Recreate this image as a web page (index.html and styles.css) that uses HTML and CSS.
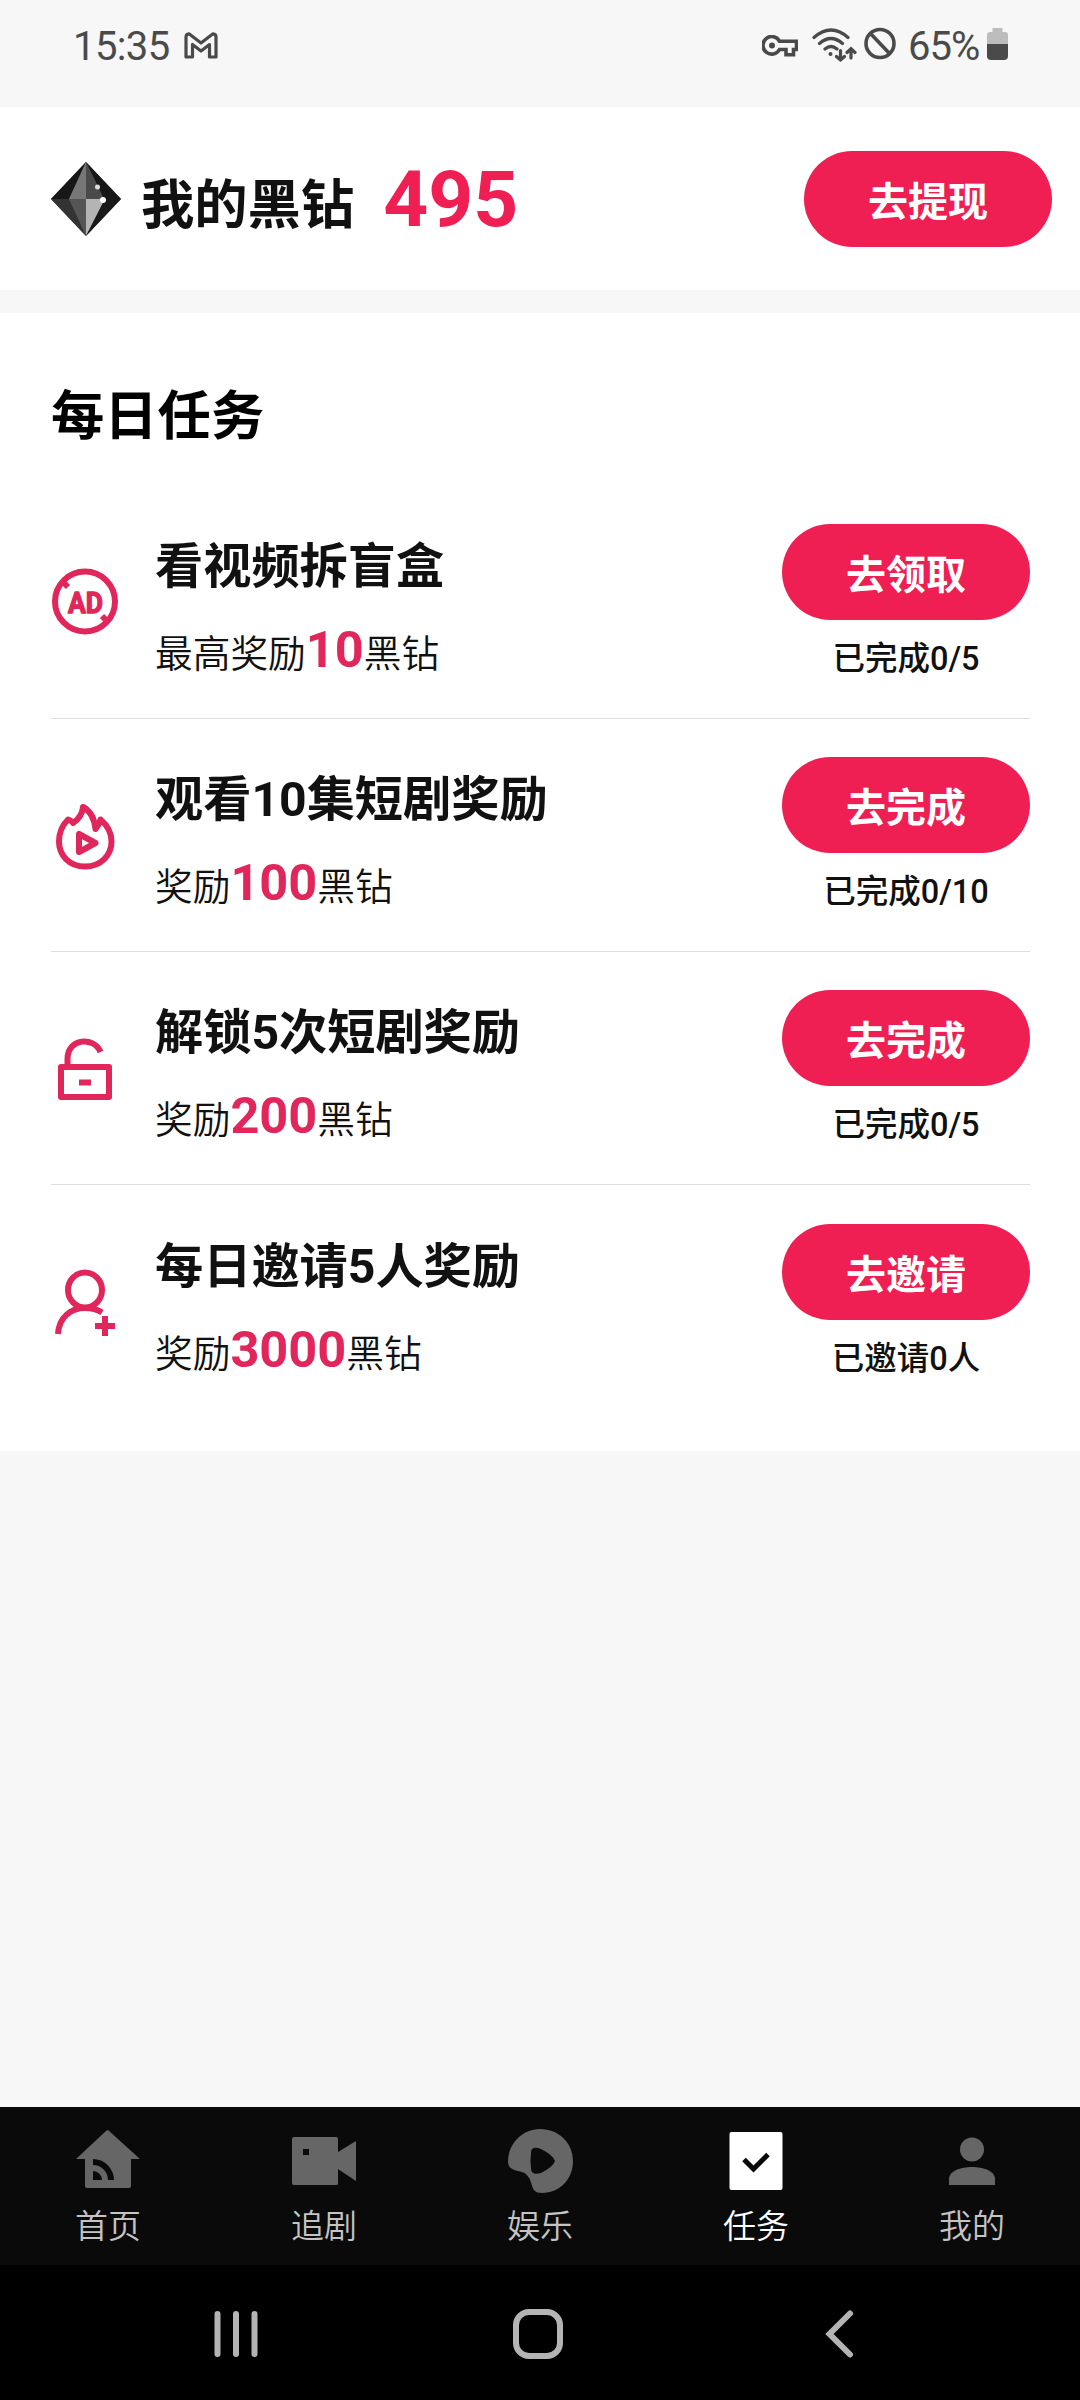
FILE: index.html
```html
<!DOCTYPE html>
<html lang="zh-CN">
<head>
<meta charset="utf-8">
<title>每日任务</title>
<link rel="stylesheet" href="styles.css">
</head>
<body>
<div class="screen">
  <header class="status-bar">
    <div class="status-left">
      <span class="clock">15:35</span>
      <svg class="gmail" width="34" height="27" viewBox="0 0 34 27"><path d="M5 1.800 17 11 29 1.800Q32 2 32 5V25H25.500V12.500L17 19 8.500 12.500V25H2V5Q2 2 5 1.800Z" fill="none" stroke="#4a4a4a" stroke-width="3.200" stroke-linejoin="round"/></svg>
    </div>
    <div class="status-right">
      <svg class="key" width="36" height="22" viewBox="0 0 36 22"><path d="M17.500 6.200H34.500V14.500H31.500V19.800H24V14.500H17.500A8.800 8.800 0 1 1 17.500 6.200Z" fill="none" stroke="#4a4a4a" stroke-width="3.600"/><circle cx="10" cy="10.500" r="3" fill="#4a4a4a"/></svg>
      <svg class="wifi" width="45" height="34" viewBox="0 0 45 34"><g fill="none" stroke="#4a4a4a" stroke-width="3.200" stroke-linecap="round"><path d="M2 9.500Q19 -5.500 36 9.500M7.500 15.500Q19 5.500 30.500 15.500M13 21Q19 16 25 21"/><path d="M28.500 22.500V32M24.500 28.500 28.500 32 32.500 28.500M39 30V21M35 24.500 39 20.800 43 24.500"/></g><circle cx="18.500" cy="26" r="2" fill="#4a4a4a"/></svg>
      <svg class="ban" width="32" height="33" viewBox="0 0 32 33"><g fill="none" stroke="#4a4a4a" stroke-width="3.600"><circle cx="16" cy="16.500" r="14"/><path d="M6.500 6.500 25.500 26.500"/></g></svg>
      <span class="battery-level">65%</span>
      <svg class="battery" width="21" height="32" viewBox="0 0 21 32"><path d="M5.500 0H15.500V4H18Q21 4 21 7V16H0V7Q0 4 3 4H5.500Z" fill="#bdbdbd"/><path d="M0 16H21V28Q21 32 17 32H4Q0 32 0 28Z" fill="#4a4a4a"/></svg>
    </div>
  </header>

  <section class="balance">
    <svg class="gem" width="70" height="74" viewBox="0 0 70 74">
      <path d="M35 0 70 37 35 74 0 37Z" fill="#3a3a3a"/>
      <path d="M35 0 0 37H18Z" fill="#171717"/><path d="M35 0 70 37H53Z" fill="#171717"/>
      <path d="M35 0 18 37H35Z" fill="#777"/><path d="M35 0 53 37H35Z" fill="#4a4a4a"/>
      <path d="M0 37H18L35 74Z" fill="#333"/><path d="M18 37H35V74Z" fill="#555"/>
      <path d="M35 37H54L35 74Z" fill="#b4b4b4"/><path d="M54 37H70L35 74Z" fill="#191919"/>
      <circle cx="46.500" cy="25" r="2.500" fill="#ddd"/><circle cx="52" cy="38" r="3" fill="#fff"/>
    </svg>
    <h1 class="balance-label">我的黑钻</h1>
    <span class="balance-value">495</span>
    <button class="pill">去提现</button>
  </section>

  <main class="tasks">
    <h2 class="tasks-title">每日任务</h2>
    <ul class="task-list">
      <li class="task">
        <svg class="task-icon" viewBox="0 0 68 68"><circle cx="34" cy="33.500" r="30"/><path d="M11 13 17 19M57 54 51 48"/><text class="ad-mark" x="34.500" y="45" textLength="35" lengthAdjust="spacingAndGlyphs">AD</text></svg>
        <div class="task-body"><h3 class="task-name">看视频拆盲盒</h3><p class="task-reward">最高奖励<b>10</b>黑钻</p></div>
        <div class="task-action"><button class="pill">去领取</button><span class="task-status">已完成0/5</span></div>
      </li>
      <li class="task">
        <svg class="task-icon" viewBox="0 0 68 68"><path d="M34 65.500C18 65.500 8 54 8 40.500C8 31 12.500 23 17 18.500Q21 20 22 22Q31 16 32 6Q43 12 44.500 28Q48 24 49.500 18.500C56 24 60.500 31 60.500 40.500C60.500 54 50 65.500 34 65.500Z"/><path d="M28 33V51L44.500 42Z"/></svg>
        <div class="task-body"><h3 class="task-name">观看10集短剧奖励</h3><p class="task-reward">奖励<b>100</b>黑钻</p></div>
        <div class="task-action"><button class="pill">去完成</button><span class="task-status">已完成0/10</span></div>
      </li>
      <li class="task">
        <svg class="task-icon" viewBox="0 0 68 68"><rect x="10" y="33" width="48" height="30"/><path d="M16.500 33V25C16.500 4 43 2 49.500 18M28 48.500H40"/></svg>
        <div class="task-body"><h3 class="task-name">解锁5次短剧奖励</h3><p class="task-reward">奖励<b>200</b>黑钻</p></div>
        <div class="task-action"><button class="pill">去完成</button><span class="task-status">已完成0/5</span></div>
      </li>
      <li class="task">
        <svg class="task-icon" viewBox="0 0 68 68"><ellipse cx="34" cy="22" rx="17" ry="17.500"/><path d="M7 66C8 49 20 40 34 40Q44 40 51 44.500M54 48V68M44 58H64"/></svg>
        <div class="task-body"><h3 class="task-name">每日邀请5人奖励</h3><p class="task-reward">奖励<b>3000</b>黑钻</p></div>
        <div class="task-action"><button class="pill">去邀请</button><span class="task-status">已邀请0人</span></div>
      </li>
    </ul>
  </main>

  <nav class="tabs">
    <a class="tab"><svg class="tab-icon" viewBox="0 0 66 66"><path d="M33 2 65 31H56V58Q56 60 54 60H12Q10 60 10 58V31H1L31 3Z" fill="#666"/><path d="M18 31A21 21 0 0 1 39 52H33A15 15 0 0 0 18 37ZM18 43A9 9 0 0 1 27 52H18Z" fill="#0a0a0a"/></svg><span>首页</span></a>
    <a class="tab"><svg class="tab-icon" viewBox="0 0 66 66"><path d="M3 9H45Q47 9 47 11V24L65 13V53L47 41V56Q47 57 45 57H3Q1 57 1 55V11Q1 9 3 9Z" fill="#666"/><path d="M12 21H18V27H12Z" fill="#0a0a0a"/></svg><span>追剧</span></a>
    <a class="tab"><svg class="tab-icon" viewBox="0 0 66 66"><path d="M33 1C52 1 66 15 66 33C66 51 53 65 35 65C28 65 26 62 24.500 56Q22 45 13 43.500Q1 42 1 34C1 15 16 1 33 1Z" fill="#666"/><path d="M24 25Q24 17 34 21Q46 27 48 33Q46 39 34 45Q24 48 24 40Q23 33 24 25Z" fill="#0a0a0a"/></svg><span>娱乐</span></a>
    <a class="tab active"><svg class="tab-icon" viewBox="0 0 66 66"><rect x="6.500" y="4" width="53" height="58" rx="2" fill="#fff"/><path d="M21 31.500 30.500 41 45 26.500" fill="none" stroke="#0a0a0a" stroke-width="5"/></svg><span>任务</span></a>
    <a class="tab"><svg class="tab-icon" viewBox="0 0 66 66"><circle cx="33" cy="21.500" r="12" fill="#666"/><path d="M10 57V51C10 35 56 35 56 51V57Z" fill="#666"/></svg><span>我的</span></a>
  </nav>

  <footer class="system-nav">
    <svg width="46" height="50" viewBox="0 0 46 50"><path d="M4.500 5V45M23 5V45M41.500 5V45"/></svg>
    <svg class="home-key" width="50" height="50" viewBox="0 0 50 50"><rect x="3" y="3" width="44" height="44" rx="13"/></svg>
    <svg class="back-key" width="30" height="50" viewBox="0 0 30 50"><path d="M26 4.500 5.500 25 26 45.500" stroke-linejoin="miter"/></svg>
  </footer>
</div>
</body>
</html>
```
FILE: styles.css
```css
* { box-sizing: border-box; margin: 0; padding: 0; }

body {
  background: #f7f7f7;
  color: #111;
  font-family: Roboto, "Noto Sans CJK SC", sans-serif;
}

.screen {
  display: flex;
  flex-direction: column;
  width: 1080px;
  height: 2400px;
}

svg { display: block; flex: none; }

.status-bar {
  display: flex;
  justify-content: space-between;
  height: 107px;
  padding: 23px 72px 0 73px;
  color: #4a4a4a;
  font-size: 40px;
  line-height: 48px;
}
.status-left, .status-right { display: flex; align-items: flex-start; }
.clock { width: 98px; letter-spacing: -0.6px; }
.gmail { margin: 9px 0 0 13px; }
.key { margin: 12px 14px 0 0; }
.wifi { margin: 5px 7px 0 0; }
.ban { margin: 4px 12px 0 0; }
.battery-level { width: 79px; letter-spacing: -1px; }
.battery { margin-top: 5px; }

.balance {
  display: flex;
  align-items: center;
  height: 183px;
  padding: 0 28px 0 51px;
  background: #fff;
}
.balance-label {
  margin: 14px 0 0 20px;
  font-size: 53.3px;
  font-weight: 700;
  line-height: 64px;
}
.balance-value {
  margin-left: 29px;
  color: #f01f53;
  font-size: 78.5px;
  font-weight: 700;
  line-height: 90px;
}

.pill {
  width: 248px;
  height: 96px;
  padding-top: 7px;
  border: 0;
  border-radius: 48px;
  background: #f01f53;
  color: #fff;
  font: 700 40px/89px Roboto, "Noto Sans CJK SC", sans-serif;
  text-align: center;
}
.balance .pill { margin-left: auto; }

.tasks {
  height: 1138px;
  margin-top: 23px;
  padding: 71px 50px 0 51px;
  background: #fff;
}
.tasks-title {
  height: 102px;
  color: #000;
  font-size: 53.3px;
  font-weight: 700;
  line-height: 66px;
}
.task-list { list-style: none; }
.task {
  display: flex;
  align-items: center;
  height: 233px;
  border-bottom: 1px solid #dedede;
}
.task:last-child { border-bottom: 0; }
.task-icon {
  width: 68px;
  height: 68px;
  overflow: visible;
  fill: none;
  stroke: #e0265a;
  stroke-width: 6;
  stroke-linejoin: round;
}
.ad-mark {
  fill: #e0265a;
  stroke-width: 1.4;
  font-size: 30px;
  font-weight: 700;
  text-anchor: middle;
}
.task-body { flex: 1; margin: 17px 0 0 36px; }
.task-name { font-size: 48.2px; font-weight: 700; line-height: 70px; }
.task-reward {
  margin-top: 13px;
  font-size: 37.7px;
  font-weight: 350;
  line-height: 70px;
}
.task-reward b { color: #e0265a; font-size: 50.5px; font-weight: 700; }
.task-action {
  display: flex;
  flex-direction: column;
  align-items: center;
  padding-top: 2px;
}
.task-status {
  margin-top: 16px;
  font-size: 32.5px;
  font-weight: 500;
  line-height: 46px;
}

.tabs {
  display: flex;
  height: 158px;
  margin-top: auto;
  background: #0a0a0a;
}
.tab {
  display: flex;
  flex: 1;
  flex-direction: column;
  align-items: center;
  padding-top: 21px;
  color: #c4c4c4;
  font-size: 33px;
  font-weight: 350;
  line-height: 48px;
}
.tab-icon { width: 66px; height: 66px; margin-bottom: 9px; }
.tab.active { color: #fff; }

.system-nav {
  display: flex;
  align-items: center;
  height: 135px;
  padding: 2px 0 0 213px;
  background: #000;
}
.system-nav svg {
  fill: none;
  stroke: #b4b4b4;
  stroke-width: 6;
  stroke-linecap: round;
}
.home-key { margin-left: 254px; }
.back-key { margin-left: 261px; }
```
